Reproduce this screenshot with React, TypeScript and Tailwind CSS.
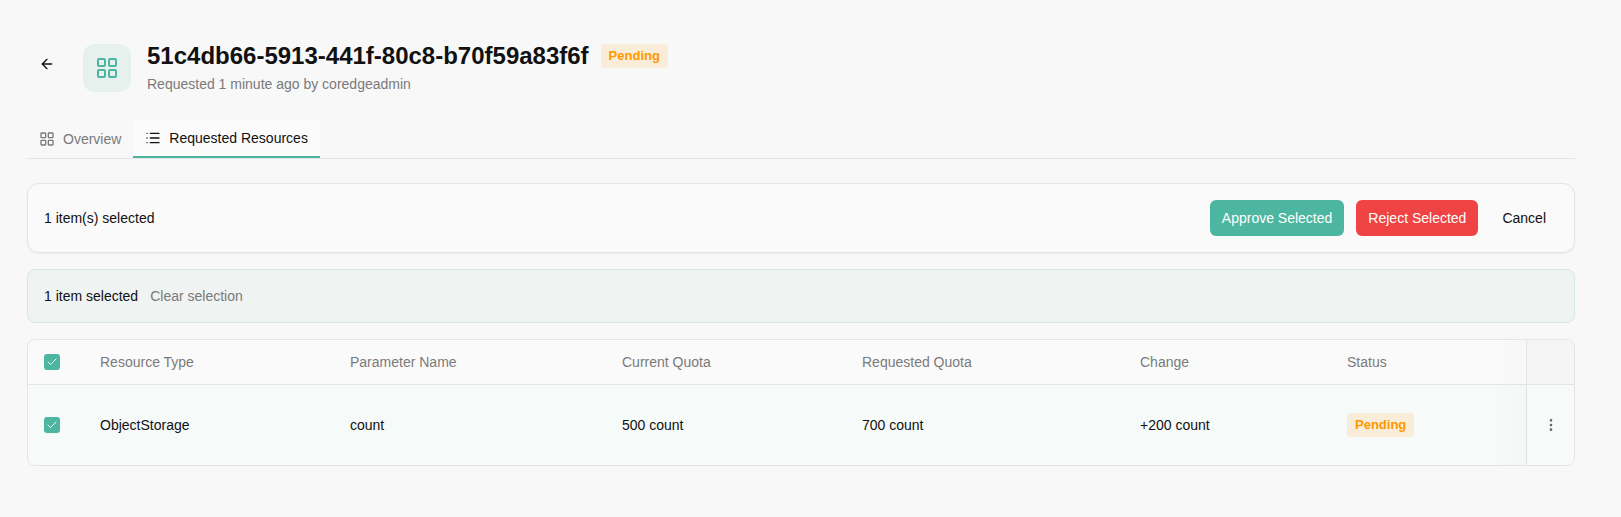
import { ArrowLeft, Check, EllipsisVertical, LayoutGrid, List } from "lucide-react";

function Pending() {
	return (
		<span className="inline-flex h-6 items-center rounded bg-[#f9edd9] px-2 text-[13px] font-bold text-[#ff9800]">
			Pending
		</span>
	);
}

function Checkbox() {
	return (
		<div className="flex h-4 w-4 items-center justify-center rounded-[3px] bg-[#4db6a0] text-white">
			<Check size={12} strokeWidth={2} />
		</div>
	);
}

const cols =
	"grid grid-cols-[72px_250px_272px_240px_278px_207px_179px_1fr]";

export default function App() {
	return (
		<div className="min-h-[517px] bg-[#f8f8f8] pt-11 pr-[46px] pl-[27px] font-['Liberation_Sans',sans-serif] text-sm text-[#111]">
			{/* Header */}
			<div className="flex h-12 items-start">
				<div className="flex h-10 w-14 items-center pl-3">
					<ArrowLeft size={16} strokeWidth={2} />
				</div>
				<div className="flex h-12 w-12 items-center justify-center rounded-xl bg-[#e6f1ee] text-[#4db6a0]">
					<LayoutGrid size={24} strokeWidth={2} />
				</div>
				<div className="ml-4 flex flex-col">
					<div className="flex h-6 items-center gap-3">
						<h1 className="text-2xl leading-6 font-bold text-[#111]">
							51c4db66-5913-441f-80c8-b70f59a83f6f
						</h1>
						<Pending />
					</div>
					<p className="mt-[6px] text-sm leading-5 text-[#7a7a7a]">
						Requested 1 minute ago by coredgeadmin
					</p>
				</div>
			</div>

			{/* Tabs */}
			<div className="mt-7 flex h-[39px] items-stretch border-b border-[#e4e4e4] pl-3">
				<div className="flex h-[38px] items-center gap-2 pr-3 text-[#7a7a7a]">
					<LayoutGrid size={16} strokeWidth={2} />
					<span>Overview</span>
				</div>
				<div className="flex h-[38px] items-center gap-2 border-b-2 border-[#4db6a0] bg-[#fbfbfb] px-3 text-[#111]">
					<List size={16} strokeWidth={2} />
					<span>Requested Resources</span>
				</div>
			</div>

			{/* Bulk actions */}
			<div className="mt-6 flex h-[70px] items-center justify-between rounded-xl border border-[#e4e4e4] bg-[#fafafa] px-4 shadow-xs">
				<span>1 item(s) selected</span>
				<div className="flex items-center gap-3">
					<button className="h-9 rounded-md bg-[#4db6a0] px-3 text-white">
						Approve Selected
					</button>
					<button className="h-9 rounded-md bg-[#f04444] px-3 text-white">
						Reject Selected
					</button>
					<button className="h-9 rounded-md px-3">Cancel</button>
				</div>
			</div>

			{/* Selection bar */}
			<div className="mt-4 flex h-[54px] items-center gap-3 rounded-lg border border-[#d3e9e1] bg-[#eff3f2] px-4">
				<span>1 item selected</span>
				<span className="text-[#7a7a7a]">Clear selection</span>
			</div>

			{/* Table */}
			<div className="relative mt-4 overflow-hidden rounded-lg border border-[#e4e4e4] bg-[#fafafa]">
				<div className={`${cols} h-[45px] items-center border-b border-[#e4e4e4] text-[#7a7a7a]`}>
					<div className="pl-4">
						<Checkbox />
					</div>
					<div>Resource Type</div>
					<div>Parameter Name</div>
					<div>Current Quota</div>
					<div>Requested Quota</div>
					<div>Change</div>
					<div>Status</div>
					<div className="h-full border-l border-[#e4e4e4] bg-[#f5f5f5]" />
				</div>
				<div className={`${cols} h-[80px] items-center bg-[#f6faf9]`}>
					<div className="pl-4">
						<Checkbox />
					</div>
					<div>ObjectStorage</div>
					<div>count</div>
					<div>500 count</div>
					<div>700 count</div>
					<div>+200 count</div>
					<div>
						<Pending />
					</div>
					<div className="flex h-full items-center justify-center border-l border-[#e0e0e0] text-[#666]">
						<EllipsisVertical size={16} strokeWidth={2} />
					</div>
				</div>
				<div className="absolute top-0 right-[48px] bottom-0 w-9 bg-gradient-to-r from-transparent to-black/[0.012]" />
			</div>
		</div>
	);
}
